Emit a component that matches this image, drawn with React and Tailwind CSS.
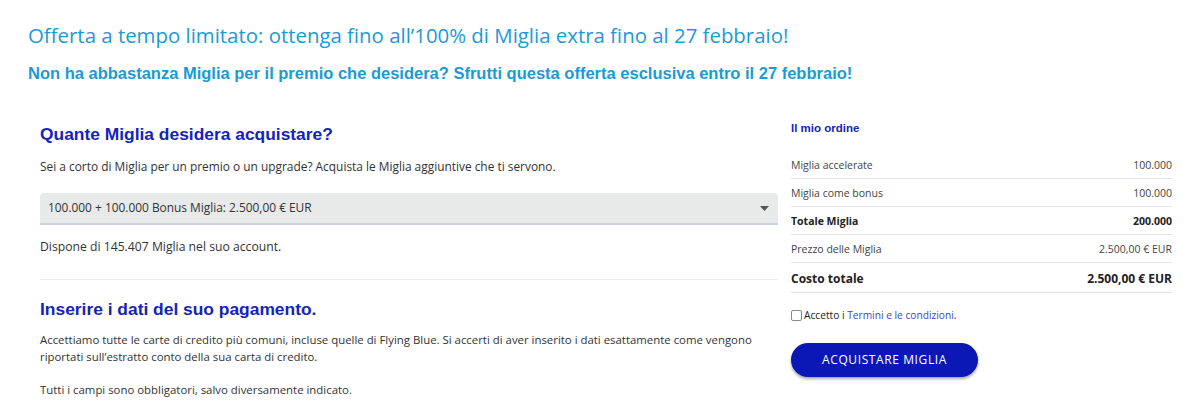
export default function App() {
  const rows = [
    { l: "Miglia accelerate", r: "100.000", bold: false },
    { l: "Miglia come bonus", r: "100.000", bold: false },
    { l: "Totale Miglia", r: "200.000", bold: true },
    { l: "Prezzo delle Miglia", r: "2.500,00 € EUR", bold: false },
  ];
  return (
    <div className="bg-white min-h-[404px] pt-[21px] px-[28px] text-[#333] font-['Open_Sans',sans-serif]">
      <h1 className="text-[20.4px] leading-[28px] text-[#1b9ad7] font-normal">
        Offerta a tempo limitato: ottenga fino all’100% di Miglia extra fino al 27 febbraio!
      </h1>
      <h2 className="mt-[14px] text-[16.5px] leading-[20px] font-bold text-[#1b9ad7] font-['Liberation_Sans',Arial,sans-serif]">
        Non ha abbastanza Miglia per il premio che desidera? Sfrutti questa offerta esclusiva entro il 27 febbraio!
      </h2>
      <div className="mt-[29px] flex gap-[13px]">
        <div className="ml-3 w-[738px] shrink-0">
          <h3 className="mt-[11px] text-[17.4px] leading-[22px] font-bold text-[#1324bb] font-['Liberation_Sans',Arial,sans-serif]">
            Quante Miglia desidera acquistare?
          </h3>
          <p className="mt-[12px] text-[11.9px] leading-[18px]">
            Sei a corto di Miglia per un premio o un upgrade? Acquista le Miglia aggiuntive che ti servono.
          </p>
          <div className="mt-[18px] h-[32px] rounded-t-[4px] bg-[#e8e9e9] border-b-2 border-[#c8d1e2] flex items-center justify-between pl-[8px] pr-[8px] text-[11.9px]">
            <span>100.000 + 100.000 Bonus Miglia: 2.500,00 € EUR</span>
            <svg width="9" height="5" viewBox="0 0 9 5" className="mr-[1px]">
              <path d="M0 0 L9 0 L4.5 5 Z" fill="#555" />
            </svg>
          </div>
          <p className="mt-[13px] text-[12.2px] leading-[18px]">Dispone di 145.407 Miglia nel suo account.</p>
          <div className="mt-[23px] border-t border-[#ebebeb]" />
          <h3 className="mt-[18px] text-[17.4px] leading-[22px] font-bold text-[#1324bb] font-['Liberation_Sans',Arial,sans-serif]">
            Inserire i dati del suo pagamento.
          </h3>
          <p className="mt-[11px] text-[11.4px] leading-[17px]">
            Accettiamo tutte le carte di credito più comuni, incluse quelle di Flying Blue. Si accerti di aver inserito i dati esattamente come vengono riportati sull’estratto conto della sua carta di credito.
          </p>
          <p className="mt-[16px] text-[11.4px] leading-[17px]">Tutti i campi sono obbligatori, salvo diversamente indicato.</p>
        </div>
        <div className="w-[381px] shrink-0">
          <div className="mt-[8px] text-[11.5px] leading-[16px] font-bold text-[#1324bb] font-['Liberation_Sans',Arial,sans-serif]">
            Il mio ordine
          </div>
          <div className="mt-[15px]">
            {rows.map((r) => (
              <div
                key={r.l}
                className={`h-[28px] pt-[2px] flex items-center justify-between border-b border-[#e3e3e3] text-[10.5px] ${r.bold ? "font-bold text-[#222]" : "text-[#444]"}`}
              >
                <span>{r.l}</span>
                <span>{r.r}</span>
              </div>
            ))}
            <div className="h-[30px] pt-[2px] flex items-center justify-between border-b border-[#e3e3e3] text-[12px] font-bold text-[#222]">
              <span>Costo totale</span>
              <span>2.500,00 € EUR</span>
            </div>
          </div>
          <label className="mt-[14px] flex items-center text-[10.2px] leading-[16px] text-[#222]">
            <span className="w-[11px] h-[11px] border border-[#888] rounded-[2px] bg-white mr-[2px] inline-block" />
            <span>
              Accetto i <span className="text-[#3b48c8]">Termini e le condizioni</span>.
            </span>
          </label>
          <button className="mt-[20px] w-[187px] h-[34px] rounded-full bg-[#0b18b5] text-white text-[12px] tracking-[0.6px] shadow-[0_2px_3px_rgba(0,0,0,0.35)]">
            ACQUISTARE MIGLIA
          </button>
        </div>
      </div>
    </div>
  );
}
